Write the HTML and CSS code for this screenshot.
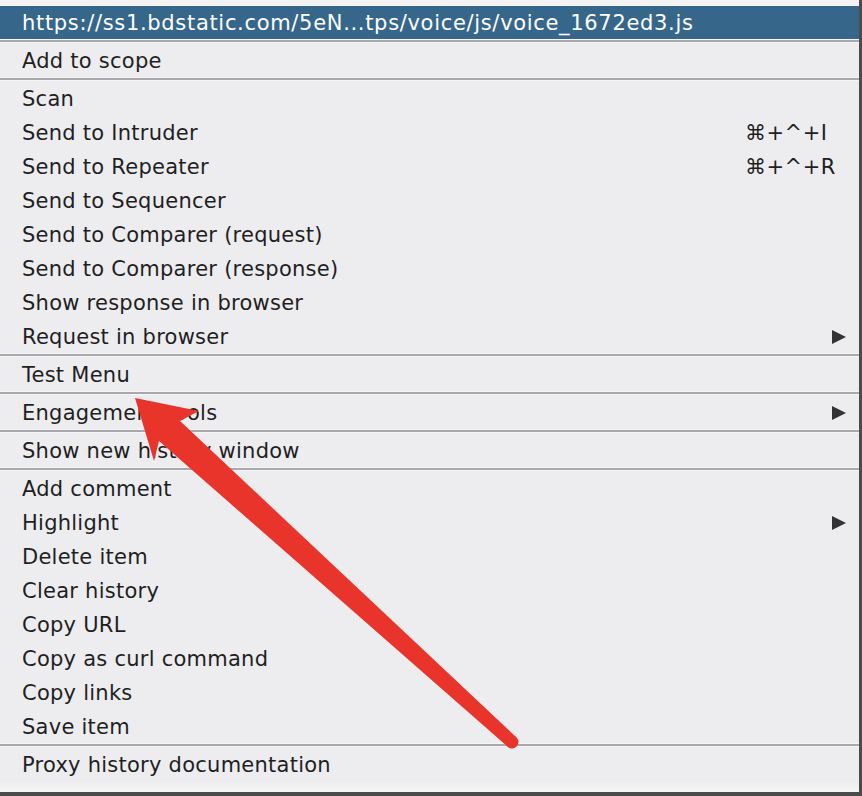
FILE: index.html
```html
<!DOCTYPE html>
<html>
<head>
<meta charset="utf-8">
<link rel="stylesheet" href="styles.css">
</head>
<body>
<div class="window">
  <div class="topstrip"></div>
  <div class="header">https://ss1.bdstatic.com/5eN...tps/voice/js/voice_1672ed3.js</div>
  <div class="sep"></div>
  <div class="item">Add to scope</div>
  <div class="sep"></div>
  <div class="item">Scan</div>
  <div class="item"><span>Send to Intruder</span><span class="key">⌘+^+I</span></div>
  <div class="item"><span>Send to Repeater</span><span class="key">⌘+^+R</span></div>
  <div class="item">Send to Sequencer</div>
  <div class="item">Send to Comparer (request)</div>
  <div class="item">Send to Comparer (response)</div>
  <div class="item">Show response in browser</div>
  <div class="item sub"><span>Request in browser</span><span class="tri"></span></div>
  <div class="sep"></div>
  <div class="item">Test Menu</div>
  <div class="sep"></div>
  <div class="item sub"><span>Engagement tools</span><span class="tri"></span></div>
  <div class="sep"></div>
  <div class="item">Show new history window</div>
  <div class="sep"></div>
  <div class="item">Add comment</div>
  <div class="item sub"><span>Highlight</span><span class="tri"></span></div>
  <div class="item">Delete item</div>
  <div class="item">Clear history</div>
  <div class="item">Copy URL</div>
  <div class="item">Copy as curl command</div>
  <div class="item">Copy links</div>
  <div class="item">Save item</div>
  <div class="sep"></div>
  <div class="item">Proxy history documentation</div>
  <div class="bottom"></div>
</div>
<svg class="arrow" width="862" height="796" viewBox="0 0 862 796">
  <polygon fill="#e8342b" points="135,398 199,411 180,421 516,737 508,747 159,441 154,461"/>
  <circle cx="512" cy="742" r="6.5" fill="#e8342b"/>
</svg>
</body>
</html>
```

FILE: styles.css
```css
html, body {
  margin: 0;
  padding: 0;
  background: #ededf0;
}
body {
  position: relative;
  width: 862px;
  height: 796px;
  overflow: hidden;
  font-family: "DejaVu Sans", "Liberation Sans", sans-serif;
}
.window {
  width: 862px;
  height: 796px;
  box-sizing: border-box;
  border-right: 3px solid #4b4b4b;
  border-bottom: 4px solid #4b4b4b;
  background: #ededf0;
  display: flex;
  flex-direction: column;
}
.topstrip {
  height: 6px;
  background: #f3f3f3;
}
.header {
  height: 33px;
  box-sizing: border-box;
  padding-top: 1px;
  background: #36678b;
  color: #ffffff;
  font-size: 21px;
  letter-spacing: 0.68px;
  line-height: 33px;
  padding-left: 22px;
  white-space: nowrap;
}
.sep {
  height: 4px;
  box-sizing: border-box;
  border-top: 1px solid #f6f6f8;
  border-bottom: 1px solid #f6f6f8;
  background: #a8a8ad;
}
.item {
  height: 34px;
  box-sizing: border-box;
  padding-top: 2px;
  line-height: 32px;
  padding-left: 22px;
  font-size: 21px;
  letter-spacing: 0.25px;
  color: #1f1f1f;
  display: flex;
  align-items: center;
  white-space: nowrap;
}
.key {
  margin-left: auto;
  width: 114px;
  letter-spacing: 0.5px;
}
.tri {
  margin-left: auto;
  margin-right: 13px;
  width: 0;
  height: 0;
  border-top: 7px solid transparent;
  border-bottom: 7px solid transparent;
  border-left: 14px solid #333333;
}
.bottom {
  flex: 1;
  background: linear-gradient(#ededf0, #f6f6f7);
}
.arrow {
  position: absolute;
  left: 0;
  top: 0;
  pointer-events: none;
}
```
